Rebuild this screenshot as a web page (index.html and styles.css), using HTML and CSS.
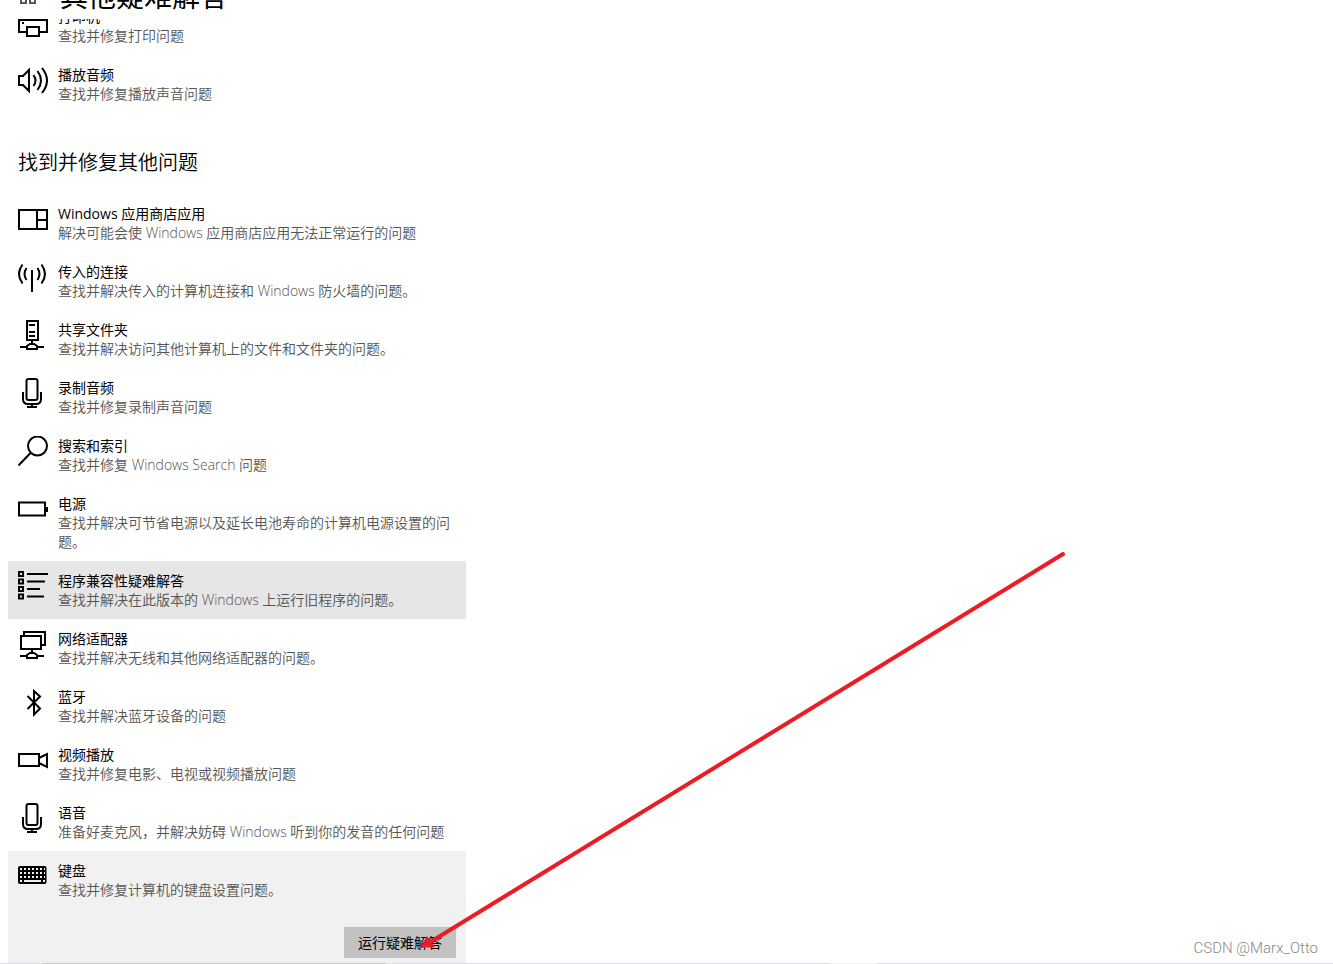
FILE: index.html
```html
<!DOCTYPE html>
<html lang="zh-CN">
  <head>
    <meta charset="UTF-8" />
    <meta name="viewport" content="width=device-width, initial-scale=1.0" />
    <title>其他疑难解答</title>
    <link rel="stylesheet" href="styles.css">
  </head>
  <body>
    <!-- 共用图标 -->
    <svg class="sprite" aria-hidden="true">
      <symbol id="mic" viewBox="0 0 30 30">
        <rect x="8.5" y="1" width="11" height="21" rx="2" />
        <path d="M5 14v7q0 5 5 5h8q5 0 5-5v-7M14 26v3M9 29h10" />
      </symbol>
    </svg>

    <header class="header">
      <div class="header-inner">
        <svg class="home" viewBox="0 0 16 16"><path d="M1 8v7h5V8M10 8v7h5V8" /></svg>
        <h1>其他疑难解答</h1>
      </div>
    </header>

    <main class="content">
      <ul class="list list-top">
        <li class="item">
          <svg class="icon" viewBox="0 0 30 30">
            <path d="M9 25H1V13h28v12h-8" />
            <rect x="9" y="20" width="12" height="9" />
            <path class="fill" d="M4 15h2v2H4z" />
          </svg>
          <div class="text"><h3>打印机</h3><p>查找并修复打印问题</p></div>
        </li>
        <li class="item">
          <svg class="icon" viewBox="0 0 30 30">
            <path d="M1 11h4l6-6v21l-6-6H1zM15.500 10q4 5.500 0 11M19.500 6q7 9.500 0 19M24 3q10 12.500 0 25" />
          </svg>
          <div class="text"><h3>播放音频</h3><p>查找并修复播放声音问题</p></div>
        </li>
      </ul>

      <h2>找到并修复其他问题</h2>

      <ul class="list">
        <li class="item">
          <svg class="icon" viewBox="0 0 30 30"><path d="M1 6h28v19H1zM19 6v19M19 16h10" /></svg>
          <div class="text"><h3>Windows 应用商店应用</h3><p>解决可能会使 Windows 应用商店应用无法正常运行的问题</p></div>
        </li>
        <li class="item">
          <svg class="icon" viewBox="0 0 30 30">
            <path d="M14 8v22M4.500 2.500q-7 9.500 0 19M8.500 6q-4 6 0 12M23.500 2.500q7 9.500 0 19M19.500 6q4 6 0 12" />
          </svg>
          <div class="text"><h3>传入的连接</h3><p>查找并解决传入的计算机连接和 Windows 防火墙的问题。</p></div>
        </li>
        <li class="item">
          <svg class="icon" viewBox="0 0 30 30">
            <path d="M9 1h11v19H9zM11 5h6M11 12h6M11 16h6M14 20v4M2 27h7M19 27h7M9 29v-3l3-2h4l3 2v3z" />
          </svg>
          <div class="text"><h3>共享文件夹</h3><p>查找并解决访问其他计算机上的文件和文件夹的问题。</p></div>
        </li>
        <li class="item">
          <svg class="icon"><use href="#mic" /></svg>
          <div class="text"><h3>录制音频</h3><p>查找并修复录制声音问题</p></div>
        </li>
        <li class="item">
          <svg class="icon" viewBox="0 0 30 30"><circle cx="19.500" cy="10" r="9.500" /><path d="M12.500 17L.5 29.500" /></svg>
          <div class="text"><h3>搜索和索引</h3><p>查找并修复 Windows Search 问题</p></div>
        </li>
        <li class="item">
          <svg class="icon" viewBox="0 0 30 30"><path d="M1 8.500h26v13H1z" /><path class="fill" d="M28 13h2v5h-2z" /></svg>
          <div class="text"><h3>电源</h3><p>查找并解决可节省电源以及延长电池寿命的计算机电源设置的问题。</p></div>
        </li>
        <li class="item item-hover">
          <svg class="icon" viewBox="0 0 30 30">
            <path d="M1 1h4v4H1zM1 8.500h4v4H1zM1 16h4v4H1zM1 23.500h4v4H1zM9 3h21M9 10.500h18M9 18h13M9 25.500h17" />
          </svg>
          <div class="text"><h3>程序兼容性疑难解答</h3><p>查找并解决在此版本的 Windows 上运行旧程序的问题。</p></div>
        </li>
        <li class="item">
          <svg class="icon" viewBox="0 0 30 30">
            <path d="M3 7h20v13H3zM6 7V3h21v13h-4M14 20v4M2 27h7M19 27h7M9 29v-3l3-2h4l3 2v3z" />
          </svg>
          <div class="text"><h3>网络适配器</h3><p>查找并解决无线和其他网络适配器的问题。</p></div>
        </li>
        <li class="item">
          <svg class="icon" viewBox="0 0 30 30"><path d="M9.500 9L22 21.500l-6 6V4l6 5.500L9.500 22" /></svg>
          <div class="text"><h3>蓝牙</h3><p>查找并解决蓝牙设备的问题</p></div>
        </li>
        <li class="item">
          <svg class="icon" viewBox="0 0 30 30"><path d="M1 9h20v12H1zM21 13l8-4v13l-8-4" /></svg>
          <div class="text"><h3>视频播放</h3><p>查找并修复电影、电视或视频播放问题</p></div>
        </li>
        <li class="item">
          <svg class="icon"><use href="#mic" /></svg>
          <div class="text"><h3>语音</h3><p>准备好麦克风，并解决妨碍 Windows 听到你的发音的任何问题</p></div>
        </li>
        <li class="item item-open">
          <svg class="icon" viewBox="0 0 30 30">
            <rect class="fill" x="0" y="5" width="28.500" height="18" rx="2" />
            <path class="keys" d="M2 8h25M2 12h25M2 16h25" />
            <path class="keys space" d="M2 20h2M6 20h17M25 20h2" />
          </svg>
          <div class="text"><h3>键盘</h3><p>查找并修复计算机的键盘设置问题。</p></div>
          <button class="run" type="button">运行疑难解答</button>
        </li>
      </ul>
    </main>

    <footer class="strip"><span></span><span class="dark"></span><span></span><span class="light"></span><span></span></footer>

    <!-- 标注箭头 -->
    <svg class="arrow" viewBox="0 0 644 396">
      <path class="shaft" d="M643 2L12 389" />
      <path class="head" d="M0 396l7-12 8 11z" />
    </svg>
    <div class="watermark">CSDN @Marx_Otto</div>
  </body>
</html>
```
FILE: styles.css
```css
* {
  box-sizing: border-box;
  margin: 0;
  padding: 0;
}
body {
  display: flex;
  flex-direction: column;
  height: 100vh;
  overflow: hidden;
  position: relative;
  background-color: #fff;
  color: #000;
  font-family: 'Open Sans', 'Noto Sans CJK SC', sans-serif;
  font-size: 14px;
  line-height: 19px;
}
.sprite {
  display: none;
}

/* 顶部标题 */
.header {
  display: flex;
  align-items: flex-end;
  flex: none;
  height: 19px;
  padding: 0 20px 3px;
}
.header-inner {
  display: flex;
  align-items: center;
  gap: 24px;
}
.header h1 {
  font-size: 28px;
  font-weight: 400;
  line-height: 40px;
}
.home {
  width: 16px;
  height: 16px;
  fill: none;
  stroke: #555;
  stroke-width: 2;
}

/* 列表 */
.content {
  flex: 1;
  min-height: 0;
  padding-left: 8px;
  overflow: hidden;
}
.content h2 {
  padding: 35px 10px 16px;
  font-size: 20px;
  font-weight: 350;
  line-height: 30px;
}
.list {
  width: 458px;
  max-width: 100%;
  list-style: none;
}
.list-top {
  margin-top: -22px;
}
.item {
  display: grid;
  grid-template-columns: 30px 1fr;
  column-gap: 10px;
  padding: 10px;
}
.item-hover {
  background-color: #e6e6e6;
}
.item-open {
  padding-bottom: 5px;
  background-color: #f1f1f1;
}
.icon {
  width: 30px;
  height: 30px;
  fill: none;
  stroke: #000;
  stroke-width: 2;
}
.icon .fill {
  fill: #000;
  stroke: none;
}
.icon .keys {
  stroke: #f1f1f1;
  stroke-dasharray: 2 2;
}
.icon .space {
  stroke-dasharray: none;
}
.text h3 {
  font-size: 14px;
  font-weight: 400;
}
.text p {
  color: #555;
  font-weight: 350;
}
.run {
  grid-column: 2;
  justify-self: end;
  width: 112px;
  height: 31px;
  margin-top: 28px;
  border: none;
  background-color: #c2c2c2;
  color: #000;
  font: inherit;
}

.strip {
  display: grid;
  flex: none;
  grid-template-columns: 42px 344px 443px 48px 1fr;
  height: 1px;
  background-color: #dcdee8;
}
.strip .dark {
  background-color: #c6c6c6;
}
.strip .light {
  background-color: #f0f0f0;
}

/* 箭头与水印 */
.arrow {
  position: absolute;
  top: 552px;
  left: 420px;
  width: 644px;
  height: 396px;
  overflow: visible;
  pointer-events: none;
}
.shaft {
  stroke: #ed1c24;
  stroke-width: 4;
  stroke-linecap: round;
}
.head {
  fill: #ed1c24;
}
.watermark {
  position: absolute;
  right: 15px;
  bottom: 6px;
  color: #888;
  font-family: Roboto, sans-serif;
  font-size: 15px;
  font-weight: 300;
}
```
